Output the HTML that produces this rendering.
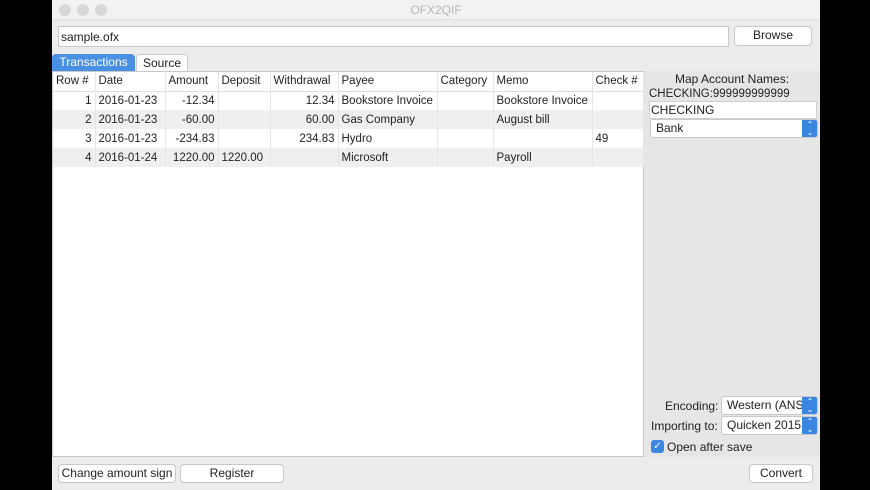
<!DOCTYPE html><html><head><style>
*{box-sizing:border-box}body{margin:0;width:870px;height:490px;background:#000;font-family:"Liberation Sans",sans-serif;font-size:12px;color:#222;position:relative;overflow:hidden}
.a{position:absolute}
.win{left:52px;top:0;width:768px;height:490px;background:#ececec}
.btn{background:#fff;border:1px solid #c8c8c8;border-radius:4px;text-align:center;line-height:17px;font-size:12px}
table{border-collapse:collapse;font-size:11.5px;table-layout:fixed}
td{height:19px;padding:0 3px;border-right:1px solid #e6e6e6;white-space:nowrap;overflow:hidden}
tr.g{background:#efefef}
.r{text-align:right}
.sel{background:#fff;border:1px solid #c8c8c8;border-radius:3px;height:19px;line-height:17px;padding-left:5px;overflow:hidden;white-space:nowrap}
.st{position:absolute;right:-1px;top:-1px;width:16px;height:19px;background:#3b86e0;border-radius:0 3px 3px 0;color:#fff;font-size:8px;text-align:center;line-height:8px;padding-top:2px}
</style></head><body>
<div class="a win"></div>
<div class="a" style="left:52px;top:0;width:768px;height:20px;background:#f2f2f2;border-bottom:1px solid #e0e0e0"></div>
<div class="a" style="left:59px;top:4px;width:12px;height:12px;border-radius:6px;background:#d8d8d8"></div>
<div class="a" style="left:77px;top:4px;width:12px;height:12px;border-radius:6px;background:#d8d8d8"></div>
<div class="a" style="left:95px;top:4px;width:12px;height:12px;border-radius:6px;background:#d8d8d8"></div>
<div class="a" style="left:52px;top:3px;width:768px;text-align:center;color:#b5b5b5;font-size:12px">OFX2QIF</div>
<div class="a" style="left:58px;top:26px;width:671px;height:21px;background:#fff;border:1px solid #c8c8c8;padding:3px 2px;font-size:12px">sample.ofx</div>
<div class="a btn" style="left:734px;top:26px;width:78px;height:20px">Browse</div>
<div class="a" style="left:52px;top:54px;width:83px;height:17px;background:#4a90e2;border-radius:4px 4px 0 0;color:#fff;text-align:center;line-height:17px">Transactions</div>
<div class="a" style="left:136px;top:54px;width:52px;height:17px;background:#fff;border:1px solid #ccc;border-bottom:0;border-radius:4px 4px 0 0;text-align:center;line-height:16px">Source</div>
<div class="a" style="left:52px;top:71px;width:592px;height:386px;background:#fff;border:1px solid #c8c8c8">
<table style="width:590px">
<colgroup><col style="width:42px"><col style="width:70px"><col style="width:53px"><col style="width:52px"><col style="width:68px"><col style="width:99px"><col style="width:56px"><col style="width:99px"><col style="width:51px"></colgroup>
<tr style="border-bottom:1px solid #ddd"><td>Row #</td><td>Date</td><td>Amount</td><td>Deposit</td><td>Withdrawal</td><td>Payee</td><td>Category</td><td>Memo</td><td>Check #</td></tr>
<tr><td class="r">1</td><td>2016-01-23</td><td class="r">-12.34</td><td></td><td class="r">12.34</td><td>Bookstore Invoice</td><td></td><td>Bookstore Invoice</td><td></td></tr>
<tr class="g"><td class="r">2</td><td>2016-01-23</td><td class="r">-60.00</td><td></td><td class="r">60.00</td><td>Gas Company</td><td></td><td>August bill</td><td></td></tr>
<tr><td class="r">3</td><td>2016-01-23</td><td class="r">-234.83</td><td></td><td class="r">234.83</td><td>Hydro</td><td></td><td></td><td>49</td></tr>
<tr class="g"><td class="r">4</td><td>2016-01-24</td><td class="r">1220.00</td><td>1220.00</td><td></td><td>Microsoft</td><td></td><td>Payroll</td><td></td></tr>
</table></div>
<div class="a" style="left:644px;top:71px;width:176px;height:386px;background:#e6e6e6"></div>
<div class="a" style="left:648px;top:72px;width:168px;text-align:center">Map Account Names:</div>
<div class="a" style="left:649px;top:88px;font-size:11.5px">CHECKING:999999999999</div>
<div class="a" style="left:649px;top:101px;width:168px;height:18px;background:#fff;border:1px solid #d0d0d0;padding:1px 1px">CHECKING</div>
<div class="a sel" style="left:650px;top:119px;width:168px">Bank<div class="st">⌃<br>⌄</div></div>
<div class="a" style="left:665px;top:399px">Encoding:</div>
<div class="a sel" style="left:721px;top:396px;width:97px">Western (ANS<div class="st">⌃<br>⌄</div></div>
<div class="a" style="left:651px;top:419px">Importing to:</div>
<div class="a sel" style="left:721px;top:416px;width:97px">Quicken 2015<div class="st">⌃<br>⌄</div></div>
<div class="a" style="left:651px;top:440px;width:13px;height:13px;background:#3b86e0;border-radius:3px;color:#fff;font-size:10px;text-align:center;line-height:13px">✓</div>
<div class="a" style="left:667px;top:440px">Open after save</div>
<div class="a btn" style="left:58px;top:464px;width:118px;height:19px">Change amount sign</div>
<div class="a btn" style="left:180px;top:464px;width:104px;height:19px">Register</div>
<div class="a btn" style="left:749px;top:464px;width:64px;height:19px">Convert</div>
</body></html>
